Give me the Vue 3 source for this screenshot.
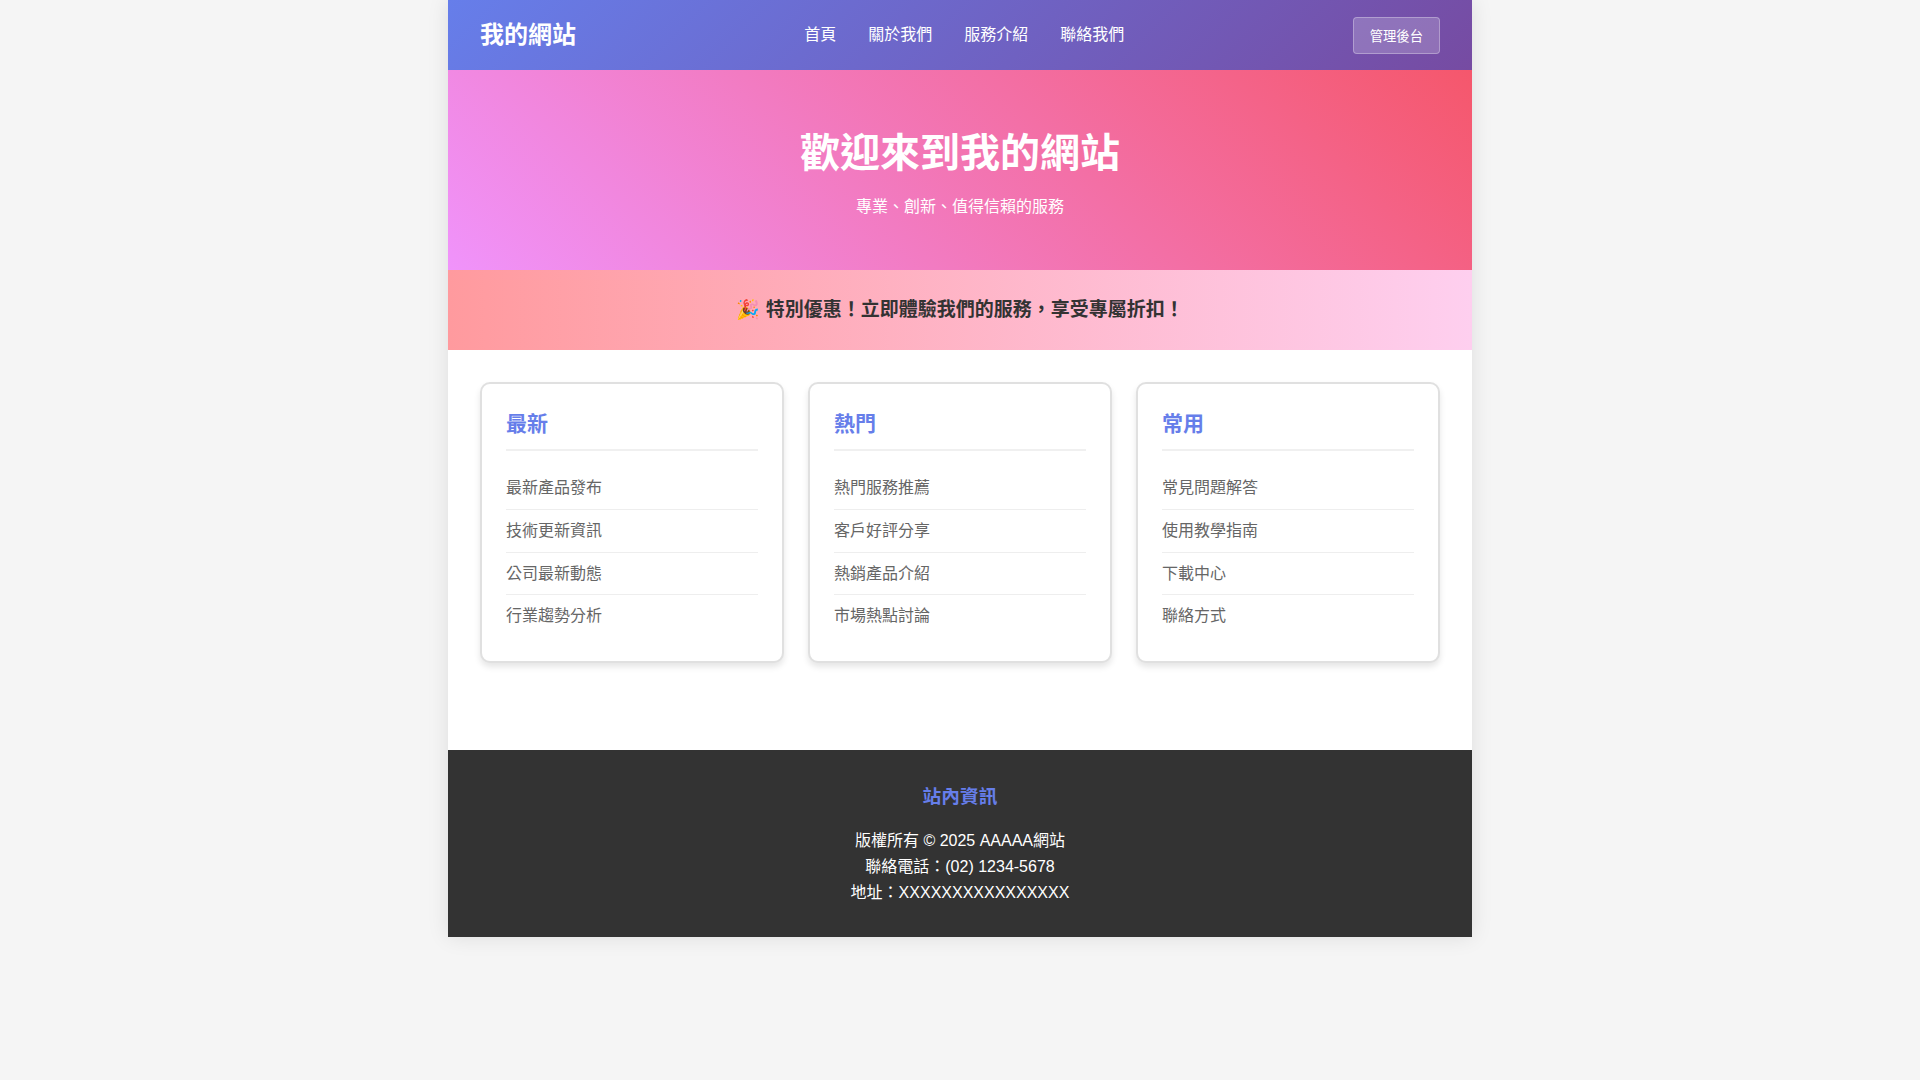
<script setup>
const navLinks = ['首頁', '關於我們', '服務介紹', '聯絡我們']

const cards = [
  { title: '最新', items: ['最新產品發布', '技術更新資訊', '公司最新動態', '行業趨勢分析'] },
  { title: '熱門', items: ['熱門服務推薦', '客戶好評分享', '熱銷產品介紹', '市場熱點討論'] },
  { title: '常用', items: ['常見問題解答', '使用教學指南', '下載中心', '聯絡方式'] },
]
</script>

<template>
  <div class="container" lang="zh-TW">
    <header class="header">
      <div class="logo">我的網站</div>
      <nav>
        <ul class="nav-list">
          <li v-for="link in navLinks" :key="link"><a href="#">{{ link }}</a></li>
        </ul>
      </nav>
      <button type="button" class="admin-btn">管理後台</button>
    </header>

    <section class="hero">
      <h1>歡迎來到我的網站</h1>
      <p>專業、創新、值得信賴的服務</p>
    </section>

    <section class="banner">🎉 特別優惠！立即體驗我們的服務，享受專屬折扣！</section>

    <main class="main">
      <section v-for="card in cards" :key="card.title" class="card">
        <h2>{{ card.title }}</h2>
        <ul>
          <li v-for="item in card.items" :key="item">{{ item }}</li>
        </ul>
      </section>
    </main>

    <footer class="footer">
      <h3>站內資訊</h3>
      <p>版權所有 © 2025 AAAAA網站</p>
      <p>聯絡電話：(02) 1234-5678</p>
      <p>地址：XXXXXXXXXXXXXXXX</p>
    </footer>
  </div>
</template>

<style>
html {
  background: #f5f5f5;
}

body {
  min-height: 100vh;
}
</style>

<style scoped>
* {
  box-sizing: border-box;
  margin: 0;
  padding: 0;
}

.container {
  max-width: 1024px;
  margin: 0 auto;
  background: #fff;
  color: #333;
  font-family: "Liberation Sans", "Noto Sans CJK TC", sans-serif;
  font-size: 16px;
  line-height: 1.6;
  box-shadow: 0 0 20px rgba(0, 0, 0, 0.1);
}

.header {
  display: flex;
  justify-content: space-between;
  align-items: center;
  padding: 16px 32px;
  background: linear-gradient(135deg, #667eea 0%, #764ba2 100%);
  color: #fff;
}

.logo {
  font-size: 24px;
  font-weight: bold;
}

.nav-list {
  display: flex;
  gap: 32px;
  list-style: none;
}

.nav-list a {
  color: #fff;
  text-decoration: none;
}

.admin-btn {
  padding: 8px 16px;
  border: 1px solid rgba(255, 255, 255, 0.3);
  border-radius: 4px;
  background: rgba(255, 255, 255, 0.2);
  color: #fff;
  font-family: inherit;
  cursor: pointer;
}

.hero {
  display: flex;
  flex-direction: column;
  justify-content: center;
  align-items: center;
  min-height: 200px;
  background: linear-gradient(45deg, #f093fb 0%, #f5576c 100%);
  color: #fff;
  text-align: center;
}

.hero h1 {
  margin-bottom: 10px;
  font-size: 40px;
  line-height: 62px;
}

.banner {
  display: flex;
  justify-content: center;
  align-items: center;
  min-height: 80px;
  background: linear-gradient(90deg, #ff9a9e 0%, #fecfef 100%);
  font-size: 19px;
  font-weight: bold;
}

.main {
  display: grid;
  grid-template-columns: repeat(3, 1fr);
  align-items: start;
  gap: 24px;
  min-height: 400px;
  padding: 32px;
}

.card {
  padding: 24px;
  border: 2px solid #e0e0e0;
  border-radius: 10px;
  background: #fff;
  box-shadow: 0 4px 6px rgba(0, 0, 0, 0.1);
}

.card h2 {
  margin-bottom: 16px;
  padding-bottom: 10px;
  border-bottom: 2px solid #f0f0f0;
  color: #667eea;
  font-size: 21px;
  line-height: 31px;
}

.card ul {
  list-style: none;
}

.card li {
  padding: 8px 0;
  border-bottom: 1px solid #eee;
  color: #666;
}

.card li:last-child {
  border-bottom: none;
}

.footer {
  padding: 32px;
  background: #333;
  color: #fff;
  text-align: center;
}

.footer h3 {
  margin-bottom: 16px;
  color: #667eea;
}
</style>
